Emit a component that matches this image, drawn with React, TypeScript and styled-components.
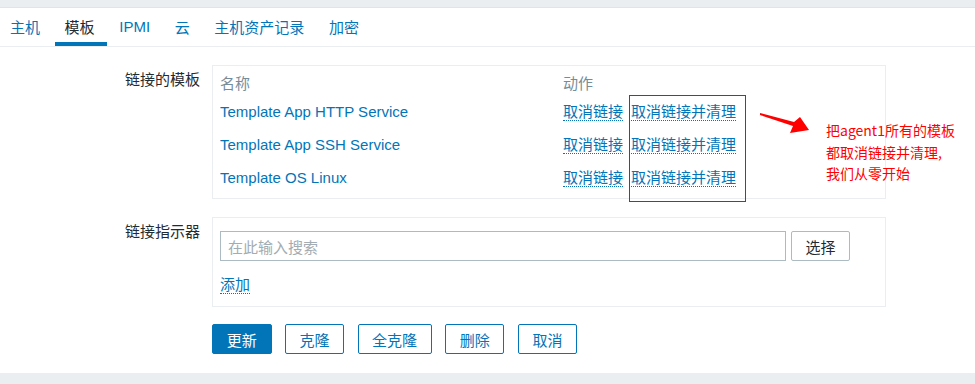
import styled, { createGlobalStyle } from "styled-components";

const GlobalStyle = createGlobalStyle`
  body {
    margin: 0;
    background: #ebeef0;
    font-family: "Liberation Sans", Arial, "Noto Sans CJK SC", sans-serif;
    font-size: 15px;
    color: #1f2c33;
  }
`;

const blue = "#0275b8";

const Page = styled.div`
  position: relative;
  width: 975px;
  height: 384px;
  padding-top: 7px;
  box-sizing: border-box;
  overflow: hidden;
`;

const Panel = styled.div`
  background: #fff;
  height: 366px;
  border-top: 1px solid #dfe4e7;
  box-sizing: border-box;
`;

const Tabs = styled.div`
  display: flex;
  border-bottom: 1px solid #ebeef0;
`;

const Tab = styled.div<{ active?: boolean }>`
  display: flex;
  align-items: center;
  height: 38px;
  box-sizing: border-box;
  padding: 2px 12px 0 10px;
  margin-right: 2.6px;
  color: ${(p) => (p.active ? "#1f2c33" : blue)};
  border-bottom: 4px solid ${(p) => (p.active ? blue : "transparent")};
`;

const Form = styled.div`
  padding-top: 18px;
  display: flex;
  flex-direction: column;
`;

const Row = styled.div<{ gap?: number }>`
  display: flex;
  margin-bottom: ${(p) => p.gap ?? 0}px;
`;

const Label = styled.div`
  width: 200px;
  padding-right: 12px;
  text-align: right;
  padding-top: 6px;
  line-height: 17px;
  color: #1f2c33;
  flex-shrink: 0;
`;

const Box = styled.div<{ h: number; pt: number }>`
  width: 674px;
  height: ${(p) => p.h}px;
  border: 1px solid #ebeef0;
  box-sizing: border-box;
  padding: ${(p) => p.pt}px 7px 0 7px;
`;

const Table = styled.div`
  display: grid;
  grid-template-columns: 343px 1fr;
`;

const Th = styled.div`
  color: #768d99;
  height: 22px;
  line-height: 22px;
`;

const Td = styled.div`
  height: 33px;
  display: flex;
  align-items: center;
  gap: 8px;
  color: ${blue};
`;

const Dotted = styled.span`
  color: ${blue};
  border-bottom: 1px dotted ${blue};
  line-height: 17px;
`;

const InputRow = styled.div`
  display: flex;
  gap: 5px;
`;

const Input = styled.div`
  width: 566px;
  height: 30px;
  border: 1px solid #acbbc2;
  box-sizing: border-box;
  color: #a3acb2;
  display: flex;
  align-items: center;
  padding-left: 7px;
`;

const SelectBtn = styled.div`
  width: 59px;
  height: 30px;
  border: 1px solid #acbbc2;
  border-radius: 2px;
  box-sizing: border-box;
  display: flex;
  align-items: center;
  justify-content: center;
  color: #1f2c33;
`;

const AddWrap = styled.div`
  margin-top: 15px;
`;

const Buttons = styled.div`
  display: flex;
  gap: 13.3px;
  padding-left: 212px;
  margin-top: 17px;
`;

const Button = styled.div<{ primary?: boolean; w: number }>`
  width: ${(p) => p.w}px;
  height: 30px;
  box-sizing: border-box;
  border: 1px solid ${blue};
  border-radius: 2px;
  background: ${(p) => (p.primary ? blue : "#fff")};
  color: ${(p) => (p.primary ? "#fff" : blue)};
  display: flex;
  align-items: center;
  justify-content: center;
`;

const RedRect = styled.div`
  position: absolute;
  left: 629px;
  top: 95px;
  width: 117px;
  height: 107px;
  border: 1px solid #ff0000;
  box-sizing: border-box;
`;

const Arrow = styled.svg`
  position: absolute;
  left: 758px;
  top: 112px;
`;

const Note = styled.div`
  position: absolute;
  left: 826px;
  top: 120px;
  color: #f00;
  font-size: 14px;
  line-height: 21.5px;
  font-family: "Noto Sans CJK SC", sans-serif;
`;

const templates = ["Template App HTTP Service", "Template App SSH Service", "Template OS Linux"];

export default function App() {
  return (
    <Page>
      <GlobalStyle />
      <Panel>
        <Tabs>
          <Tab>主机</Tab>
          <Tab active>模板</Tab>
          <Tab>IPMI</Tab>
          <Tab>云</Tab>
          <Tab>主机资产记录</Tab>
          <Tab>加密</Tab>
        </Tabs>
        <Form>
          <Row gap={18}>
            <Label>链接的模板</Label>
            <Box h={134} pt={7}>
              <Table>
                <Th>名称</Th>
                <Th>动作</Th>
                {templates.flatMap((t) => [
                  <Td key={t}>{t}</Td>,
                  <Td key={t + "-a"}>
                    <Dotted>取消链接</Dotted>
                    <Dotted>取消链接并清理</Dotted>
                  </Td>,
                ])}
              </Table>
            </Box>
          </Row>
          <Row>
            <Label>链接指示器</Label>
            <Box h={90} pt={13}>
              <InputRow>
                <Input>在此输入搜索</Input>
                <SelectBtn>选择</SelectBtn>
              </InputRow>
              <AddWrap>
                <Dotted>添加</Dotted>
              </AddWrap>
            </Box>
          </Row>
          <Buttons>
            <Button primary w={59.5}>更新</Button>
            <Button w={59.5}>克隆</Button>
            <Button w={74}>全克隆</Button>
            <Button w={59.5}>删除</Button>
            <Button w={59.5}>取消</Button>
          </Buttons>
        </Form>
      </Panel>
      <RedRect />
      <Arrow width="54" height="24" viewBox="0 0 54 24">
        <path d="M2 1 L36 10 L42 5 L51 18 L32 21 L35 14 L2 3 Z" fill="#f00" />
      </Arrow>
      <Note>
        把agent1所有的模板
        <br />
        都取消链接并清理,
        <br />
        我们从零开始
      </Note>
    </Page>
  );
}
